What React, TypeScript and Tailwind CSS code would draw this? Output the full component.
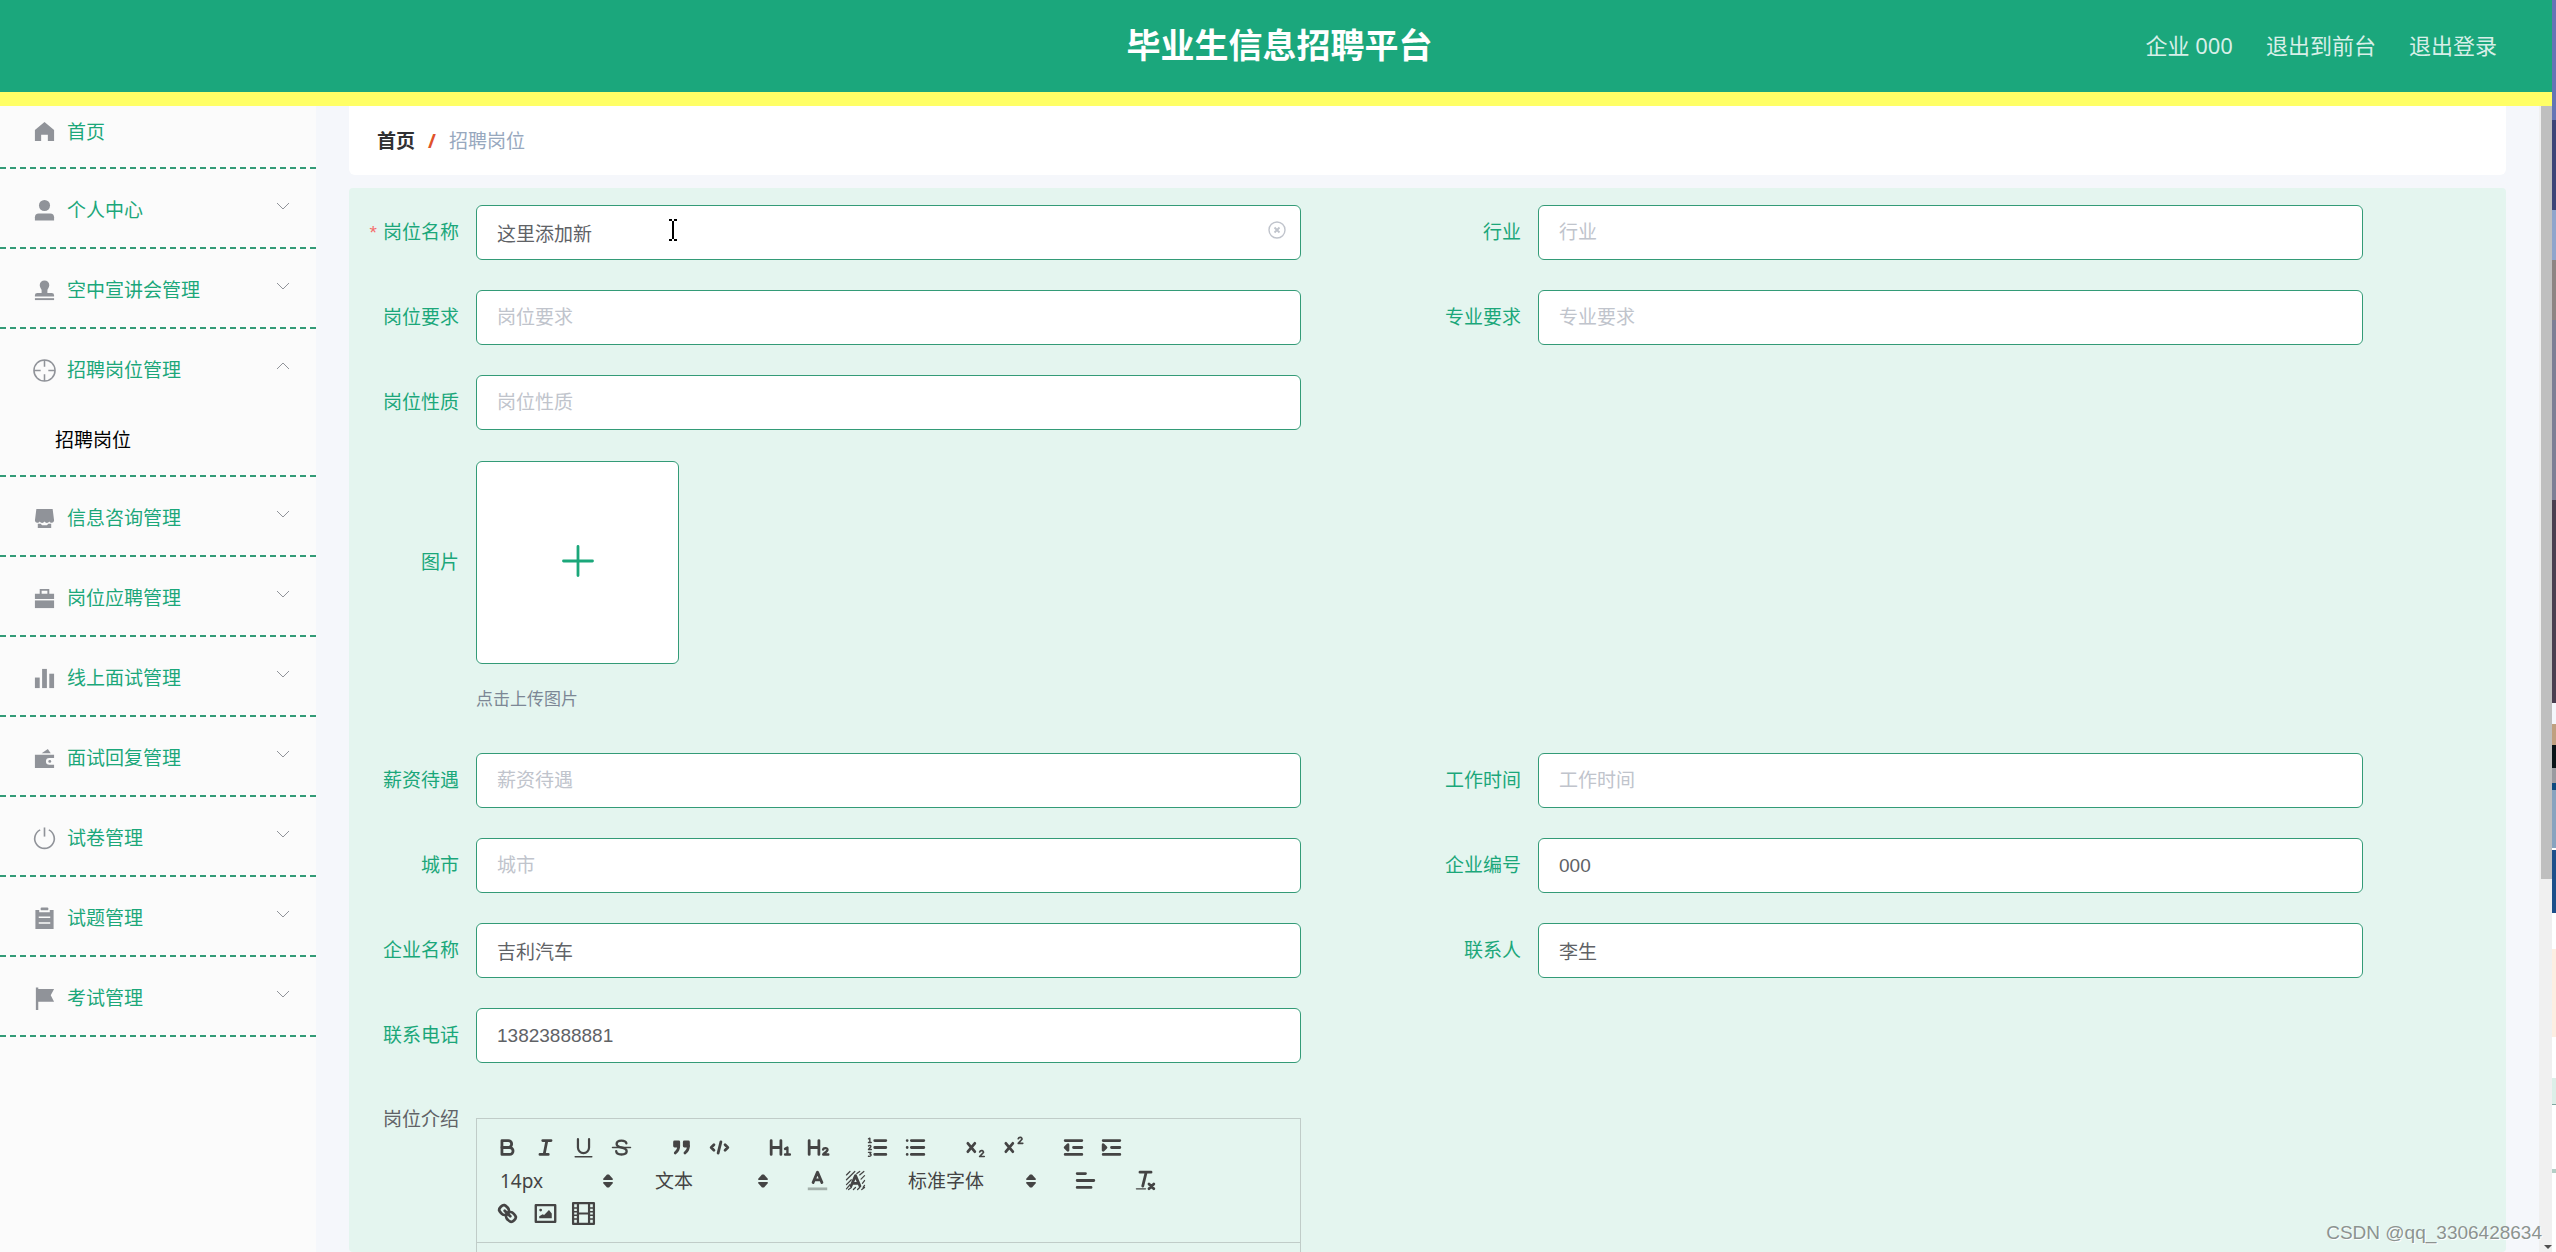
import type { ReactNode } from "react";

const menu = [
  { label: "个人中心", icon: "user" },
  { label: "空中宣讲会管理", icon: "stamp" },
  { label: "招聘岗位管理", icon: "aim", children: ["招聘岗位"] },
  { label: "信息咨询管理", icon: "shop" },
  { label: "岗位应聘管理", icon: "briefcase" },
  { label: "线上面试管理", icon: "chart" },
  { label: "面试回复管理", icon: "wallet" },
  { label: "试卷管理", icon: "power" },
  { label: "试题管理", icon: "order" },
  { label: "考试管理", icon: "flag" },
];

const menuIcons: Record<string, ReactNode> = {
  home: <path d="M12 2 L22 10.5 V22 H15.5 V15.5 H8.5 V22 H2 V10.5 Z" fill="currentColor" />,
  user: (
    <g fill="currentColor">
      <circle cx="12" cy="6.8" r="5.8" />
      <path d="M2 22.5 V19 a4 4 0 0 1 4-4 h12 a4 4 0 0 1 4 4 v3.5 Z" />
    </g>
  ),
  stamp: (
    <g fill="currentColor">
      <path d="M12 1.5 a5 5 0 0 1 5 5 c0 2.6-2 3.6-2 5.5 v2.5 h4.5 a2.5 2.5 0 0 1 2.5 2.5 v1.2 H2 V17 a2.5 2.5 0 0 1 2.5-2.5 H9 V12 c0-1.9-2-2.9-2-5.5 a5 5 0 0 1 5-5 Z" />
      <rect x="2" y="20" width="20" height="2" />
    </g>
  ),
  aim: (
    <g fill="none" stroke="currentColor" strokeWidth="1.6">
      <circle cx="12" cy="12" r="11" />
      <path d="M12 1 V8 M12 16 V23 M1 12 H8 M16 12 H23" />
    </g>
  ),
  shop: (
    <g fill="currentColor">
      <path d="M3.5 2 H20.5 L22 14 a2.7 2.7 0 0 1-5 1.2 a2.9 2.9 0 0 1-5 0 a2.9 2.9 0 0 1-5 0 A2.7 2.7 0 0 1 2 14 Z" />
      <path d="M5 17.5 H8 l1.5 1.5 h5 L16 17.5 h3 V22 H5 Z" />
    </g>
  ),
  briefcase: (
    <g fill="currentColor">
      <path d="M7 7 V2 h10 v5 h5 v5.5 H2 V7 Z M9 4 v3 h6 V4 Z" fillRule="evenodd" />
      <rect x="2" y="14" width="20" height="8" />
    </g>
  ),
  chart: (
    <g fill="currentColor">
      <rect x="2" y="11" width="5" height="11" />
      <rect x="9.5" y="2" width="5" height="20" />
      <rect x="17" y="7" width="5" height="15" />
    </g>
  ),
  wallet: (
    <g fill="currentColor">
      <path d="M9 6.5 L15.5 2 L18.5 6.5 Z" />
      <path d="M2 8 H22 V11.5 H17 a3.5 3.5 0 0 0 0 7 H22 V22 H2 Z" />
      <circle cx="17.5" cy="15" r="1.5" />
    </g>
  ),
  power: (
    <g fill="none" stroke="currentColor" strokeWidth="1.7">
      <path d="M7.5 3 A10.2 10.2 0 1 0 16.5 3" />
      <path d="M12 0.5 V10" />
    </g>
  ),
  order: (
    <g fill="currentColor">
      <rect x="8" y="0.5" width="8" height="3" rx="1" />
      <path
        d="M2.5 3 H6.5 V5.5 H17.5 V3 H21.5 V23 H2.5 Z M6 10 v1.5 h12 V10 Z M6 16 v1.5 h12 V16 Z"
        fillRule="evenodd"
      />
    </g>
  ),
  flag: <path d="M3 0.5 H5.5 V2 H22 L18.5 8.5 L22 15.5 H5.5 V24 H3 Z" fill="currentColor" />,
};

function MenuIcon({ name }: { name: string }) {
  return (
    <svg viewBox="0 0 24 24" className="mr-[11px] size-[23px] shrink-0 text-[#909399]">
      {menuIcons[name]}
    </svg>
  );
}

function Chevron({ open }: { open?: boolean }) {
  return (
    <svg viewBox="0 0 14 8" className="mb-2 ml-auto h-2 w-3.5" fill="none" stroke="#909399">
      <path d={open ? "M1 7 L7 1 L13 7" : "M1 1 L7 7 L13 1"} />
    </svg>
  );
}

function Sidebar() {
  return (
    <nav className="w-[316px] shrink-0 bg-[#fbfbfb] text-[#1ba77a]">
      <ul>
        <li className="border-b-2 border-dashed border-[#339b77]">
          <a href="#home" className="flex h-[61px] items-center pb-[10px] pl-[33px]">
            <MenuIcon name="home" />
            首页
          </a>
        </li>
        {menu.map((item) => (
          <li key={item.label} className="border-b-2 border-dashed border-[#339b77]">
            <button type="button" className="flex h-[78px] w-full items-center pt-1 pr-[26px] pl-[33px]">
              <MenuIcon name={item.icon} />
              {item.label}
              <Chevron open={Boolean(item.children)} />
            </button>
            {item.children?.map((child) => (
              <a key={child} href="#post" className="flex h-[68px] items-center pb-0.5 pl-[55px] text-black">
                {child}
              </a>
            ))}
          </li>
        ))}
      </ul>
    </nav>
  );
}

type FieldProps = {
  id: string;
  label: string;
  value?: string;
  required?: boolean;
  children?: ReactNode;
};

function Field({ id, label, value, required, children }: FieldProps) {
  return (
    <div className="flex w-[88%] items-center">
      <label htmlFor={id} className="w-[110px] shrink-0 pr-[17px] text-right text-[#1ba77a]">
        {required && <span className="mr-1.5 text-[#f56c6c]">*</span>}
        {label}
      </label>
      <div className="relative min-w-0 flex-1">
        <input
          id={id}
          type="text"
          defaultValue={value}
          placeholder={label}
          className="block h-[55px] w-full rounded-md border border-[#339b77] bg-white px-5 text-[#606266] outline-none placeholder:text-[#c0c4cc]"
        />
        {children}
      </div>
    </div>
  );
}

/* Toolbar drawings, all on an 18 unit grid */
const tools: Record<string, ReactNode> = {
  bold: (
    <>
      <path d="M5 4h4.5A2.5 2.5 0 0 1 12 6.5 2.5 2.5 0 0 1 9.5 9H5V4Z" />
      <path d="M5 9h5.5A2.5 2.5 0 0 1 13 11.5 2.5 2.5 0 0 1 10.5 14H5V9Z" />
    </>
  ),
  italic: <path d="M7 4H13M5 14H11M8 14L10 4" />,
  underline: (
    <>
      <path d="M5 3V9a4 4 0 0 0 8 0V3" strokeWidth="1.6" />
      <path d="M3 15.7H15" strokeWidth="1" />
    </>
  ),
  strike: (
    <>
      <path d="M2.5 9H15.5" strokeWidth="1" />
      <path
        d="M12.5 6C12.2 4.5 11 4 9 4C7 4 5.5 4.8 5.5 6.5C5.5 8 7 8.6 9 9C11.3 9.5 12.7 10.2 12.7 11.7C12.7 13.2 11 14 9 14C6.8 14 5.3 13.3 5.2 11.7"
        strokeWidth="1.7"
      />
    </>
  ),
  quote: (
    <g fill="currentColor">
      <rect x="4" y="5" width="3" height="3" />
      <rect x="11" y="5" width="3" height="3" />
      <path d="M7 8c0 4-2.5 4.5-2.5 5M14 8c0 4-2.5 4.5-2.5 5" fill="none" />
    </g>
  ),
  code: <path d="M5 7L3 9L5 11M13 7L15 9L13 11M10 5L8 13" />,
  h1: (
    <>
      <path d="M3 4V14M10 4V14M3 9H10" />
      <path d="M13 10L14.7 9V14M13 14H16.5" strokeWidth="1.7" />
    </>
  ),
  h2: (
    <>
      <path d="M3 4V14M10 4V14M3 9H10" />
      <path d="M13 10.5C13.3 9 16.4 9 16.2 10.8C16 12 13.8 13 13.1 14H16.8" strokeWidth="1.7" />
    </>
  ),
  ordered: (
    <>
      <path d="M7 4H15M7 9H15M7 14H15" />
      <path
        d="M2.5 2.8L3.5 2.3V5.4M2.5 5.4H4.5M2.5 7.9C3 7.2 4.5 7.5 4.2 8.5L2.5 10.4H4.6M2.5 12.5H4.3L3.5 13.7C5 13.7 4.7 15.7 2.5 15.3"
        strokeWidth="1"
      />
    </>
  ),
  bullet: <path d="M6 4H15M6 9H15M6 14H15M3 4H3M3 9H3M3 14H3" />,
  sub: (
    <>
      <path d="M3.5 6L8.5 12M8.5 6L3.5 12" />
      <path d="M12 12.2C12.5 10.7 15 11 14.7 12.6L12 15.5H15.3" strokeWidth="1.2" />
    </>
  ),
  super: (
    <>
      <path d="M3.5 6L8.5 12M8.5 6L3.5 12" />
      <path d="M12.4 2.7C12.9 1.2 15.4 1.5 15.1 3.1L12.4 6H15.7" strokeWidth="1.2" />
    </>
  ),
  outdent: (
    <>
      <path d="M3 14H15M3 4H15M9 9H15" />
      <path d="M5 7L3 9L5 11Z" fill="currentColor" />
    </>
  ),
  indent: (
    <>
      <path d="M3 14H15M3 4H15M9 9H15" />
      <path d="M3 7L5 9L3 11Z" fill="currentColor" />
    </>
  ),
  color: (
    <>
      <path d="M2 15H16" stroke="#a3b0ab" strokeLinecap="butt" />
      <path d="M5.8 10.5L9 3L12.2 10.5M7 8.5H11" />
    </>
  ),
  background: (
    <>
      <path
        d="M2.5 5L5 2.5M2.5 8.5L8.5 2.5M2.5 12L6 8.5M10 4L12 2.5M2.5 15L5 12M4 15.5L6 14M12 5L15 2.5M13 8L15.5 5.5M14 11L15.5 9M14.5 14L15.5 12.5M7.5 15.5L9 14M10.5 15.5L12 14M13.5 15.5L15.5 14"
        strokeWidth="0.9"
      />
      <path d="M5.8 13L9 5.5L12.2 13M7 11H11" />
    </>
  ),
  align: <path d="M3 9H15M3 14H13M3 4H9" />,
  clean: (
    <>
      <path d="M5 3H13M9.5 3L7 13" />
      <path d="M2.5 15H9" strokeWidth="1" />
      <path d="M11.5 11.5L15 15M15 11.5L11.5 15" />
    </>
  ),
  link: (
    <>
      <path d="M7 7L11 11" />
      <path d="M8.9 4.6a3.5 3.5 0 0 1 .4 4.7A3.5 3.5 0 0 1 4.6 8.900C3.2 7.5 2 6.4 4.2 4.2S7.500 3.2 8.900 4.6Z" />
      <path d="M13.4 9.100a3.5 3.5 0 0 0-4.700-.4 3.5 3.5 0 0 0 .4 4.700c1.400 1.400 2.500 2.500 4.700 .4S14.800 10.500 13.400 9.100Z" />
    </>
  ),
  image: (
    <>
      <rect x="2" y="3" width="14" height="12" strokeWidth="1.7" />
      <circle cx="5.5" cy="6.5" r="1" fill="currentColor" stroke="none" />
      <path d="M4.5 12.5V11L7 9.5L8 10L11.5 6.5L13.5 9V12.5Z" fill="currentColor" stroke="none" />
    </>
  ),
  video: (
    <>
      <rect x="1.500" y="1.500" width="15" height="15" strokeWidth="1.600" />
      <path d="M5 2V16M13 2V16M5 9H13" strokeWidth="1.600" />
      <path d="M2 5H5M2 7.700H5M2 10.300H5M2 13H5M13 5H16M13 7.700H16M13 10.300H16M13 13H16" strokeWidth="1" />
    </>
  ),
};

const firstRow = [
  ["bold", "italic", "underline", "strike"],
  ["quote", "code"],
  ["h1", "h2"],
  ["ordered", "bullet"],
  ["sub", "super"],
  ["outdent", "indent"],
];

function ToolGroup({ names }: { names: string[] }) {
  return (
    <div className="flex">
      {names.map((name) => (
        <button key={name} type="button" aria-label={name} className="flex h-[33px] w-[38px] items-center justify-center">
          <svg
            viewBox="0 0 18 18"
            className="size-[25px]"
            fill="none"
            stroke="currentColor"
            strokeWidth="2"
            strokeLinecap="round"
            strokeLinejoin="round"
          >
            {tools[name]}
          </svg>
        </button>
      ))}
    </div>
  );
}

function ToolSelect({ label, value, wide }: { label: string; value: string; wide?: boolean }) {
  return (
    <div className={wide ? "relative w-[148px]" : "relative w-[133px]"}>
      <select
        aria-label={label}
        className="h-[33px] w-full appearance-none bg-transparent pl-3 font-['Noto_Sans','Noto_Sans_CJK_SC',sans-serif] outline-none"
      >
        <option>{value}</option>
      </select>
      <svg viewBox="0 0 10 14" className="pointer-events-none absolute top-[10px] right-2 h-3.5 w-2.5" fill="currentColor">
        <path d="M1 6 Q0 6 0 5 L4 0.5 H6 L10 5 Q10 6 9 6 Z M1 8 Q0 8 0 9 L4 13.5 H6 L10 9 Q10 8 9 8 Z" />
      </svg>
    </div>
  );
}

function Editor() {
  return (
    <div className="flex w-[88%]">
      <span id="intro-label" className="-mt-3 w-[110px] shrink-0 pr-[17px] text-right text-[#606266]">
        岗位介绍
      </span>
      <div className="min-w-0 flex-1 border border-[#c0ccc8] text-[#444]">
        <div className="border-b border-[#c0ccc8] px-[11px] py-3">
          <div className="flex gap-[22px]">
            {firstRow.map((names) => (
              <ToolGroup key={names[0]} names={names} />
            ))}
          </div>
          <div className="flex gap-[22px]">
            <ToolSelect label="字号" value="14px" />
            <ToolSelect label="标题" value="文本" />
            <ToolGroup names={["color", "background"]} />
            <ToolSelect label="字体" value="标准字体" wide />
            <ToolGroup names={["align"]} />
            <ToolGroup names={["clean"]} />
          </div>
          <ToolGroup names={["link", "image", "video"]} />
        </div>
        <div role="textbox" aria-labelledby="intro-label" contentEditable className="h-[400px] outline-none" />
      </div>
    </div>
  );
}

function PostForm() {
  return (
    <form className="min-h-0 flex-1 overflow-hidden rounded-sm bg-[#e4f5ef] pt-[17px] pr-4 pl-[17px] font-['Liberation_Sans','Noto_Sans_CJK_SC',sans-serif]">
      <div className="grid grid-cols-2 gap-y-[30px]">
        <Field id="name" label="岗位名称" value="这里添加新" required>
          <button type="button" aria-label="清空" className="absolute top-4 right-[15px] text-[#c0c4cc]">
            <svg viewBox="0 0 18 18" className="size-[18px]" fill="none" stroke="currentColor">
              <circle cx="9" cy="9" r="8" strokeWidth="1.4" />
              <path d="M6.5 6.5L11.5 11.5M11.5 6.5L6.5 11.5" strokeWidth="1.8" />
            </svg>
          </button>
          {/* text pointer */}
          <svg
            viewBox="0 0 10 22"
            className="pointer-events-none absolute top-[14px] left-[192px] h-[22px] w-2.5"
            fill="none"
            stroke="black"
            strokeWidth="2"
          >
            <path d="M1 1H4M6 1H9M5 2V20M1 21H4M6 21H9" />
          </svg>
        </Field>
        <Field id="industry" label="行业" />
        <Field id="require" label="岗位要求" />
        <Field id="major" label="专业要求" />
        <Field id="nature" label="岗位性质" />
      </div>

      <div className="mt-[31px] flex">
        <label htmlFor="picture" className="w-[110px] pr-[17px] text-right leading-[203px] text-[#1ba77a]">
          图片
        </label>
        <div>
          <label
            htmlFor="picture"
            className="flex size-[203px] items-center justify-center rounded-md border border-[#339b77] bg-white pb-1"
          >
            <svg viewBox="0 0 32 32" className="size-8" stroke="#1ba77a" strokeWidth="2.8" strokeLinecap="round">
              <path d="M16 1.500V30.500M1.500 16H30.500" />
            </svg>
            <input id="picture" type="file" className="sr-only" />
          </label>
          <p className="mt-6 text-[17px] leading-6 text-[#7c8795]">点击上传图片</p>
        </div>
      </div>

      <div className="mt-[41px] grid grid-cols-2 gap-y-[30px]">
        <Field id="salary" label="薪资待遇" />
        <Field id="hours" label="工作时间" />
        <Field id="city" label="城市" />
        <Field id="code" label="企业编号" value="000" />
        <Field id="company" label="企业名称" value="吉利汽车" />
        <Field id="contact" label="联系人" value="李生" />
        <Field id="phone" label="联系电话" value="13823888881" />
      </div>

      <div className="mt-[55px] grid grid-cols-2">
        <Editor />
      </div>
    </form>
  );
}

/* Sliver of the window that sits behind the browser */
function BackgroundStrip() {
  return (
    <div className="flex w-1 shrink-0 flex-col bg-white">
      <div className="h-[120px] bg-[#6475b5]" />
      <div className="h-[90px] bg-[#3d4578]" />
      <div className="h-[50px] bg-[#8fa5cc]" />
      <div className="h-[60px] bg-[#8d8583]" />
      <div className="h-[180px] bg-[#7c7f95]" />
      <div className="h-[203px] bg-[#4a3f50]" />
      <div className="h-[21px] bg-[#f4f6fb]" />
      <div className="h-[21px] bg-[#bfa080]" />
      <div className="h-[23px] bg-[#0a1418]" />
      <div className="h-[15px] bg-[#9a9aa0]" />
      <div className="h-[7px] bg-[#0d4a80]" />
      <div className="h-[58px] bg-[#88a3bf]" />
      <div className="mt-0.5 h-[63px] bg-[#1d4f8a]" />
      <div className="mt-9 h-[88px] bg-[#fdeee2]" />
      <div className="mt-[41px] h-[27px] border-b border-[#7fa8a0] bg-[#dcefe8]" />
      <div className="mt-[64px] h-1 bg-[#b5cfc7]" />
    </div>
  );
}

export default function App() {
  return (
    <div className="relative flex h-screen overflow-hidden font-['Noto_Sans','Noto_Sans_CJK_SC',sans-serif] text-[19px] leading-7">
      <div className="flex min-w-0 flex-1 flex-col">
        <header className="grid h-[106px] shrink-0 grid-cols-[1fr_auto_1fr] items-center border-b-[14px] border-[#ffff66] bg-[#1ba77c] pr-[55px] pb-[3px] pl-[62px]">
          <h1 className="col-start-2 text-[34px] font-bold text-white">毕业生信息招聘平台</h1>
          <div className="flex justify-end gap-[33px] text-[22px] text-[#d8efe8]">
            <span>企业 000</span>
            <a href="#front">退出到前台</a>
            <a href="#logout">退出登录</a>
          </div>
        </header>

        <div className="flex min-h-0 flex-1">
          <Sidebar />
          <main className="flex min-w-0 flex-1 flex-col bg-[#f5f7fb] px-[33px]">
            <div className="mb-[13px] flex h-[69px] shrink-0 items-center gap-[13px] rounded-b-md bg-white px-7">
              <a href="#home" className="font-bold text-[#303133]">
                首页
              </a>
              <span className="font-bold text-[#e0522a]">/</span>
              <span className="text-[#97a8be]">招聘岗位</span>
            </div>
            <PostForm />
          </main>
          <div className="flex w-[13px] shrink-0 flex-col items-end justify-between bg-[#f0f0f0]">
            <div className="h-[773px] w-[11px] bg-[#bfbfbf]" />
            <svg viewBox="0 0 8 8" className="size-2" fill="#505050">
              <path d="M0 1H8L4 5Z" />
            </svg>
          </div>
        </div>
      </div>
      <BackgroundStrip />
      <p className="absolute right-[14px] bottom-[5px] font-['Liberation_Sans',sans-serif] text-[19px] text-[#8c9390] [text-shadow:1px_1px_0_#ffffff]">
        CSDN @qq_3306428634
      </p>
    </div>
  );
}
